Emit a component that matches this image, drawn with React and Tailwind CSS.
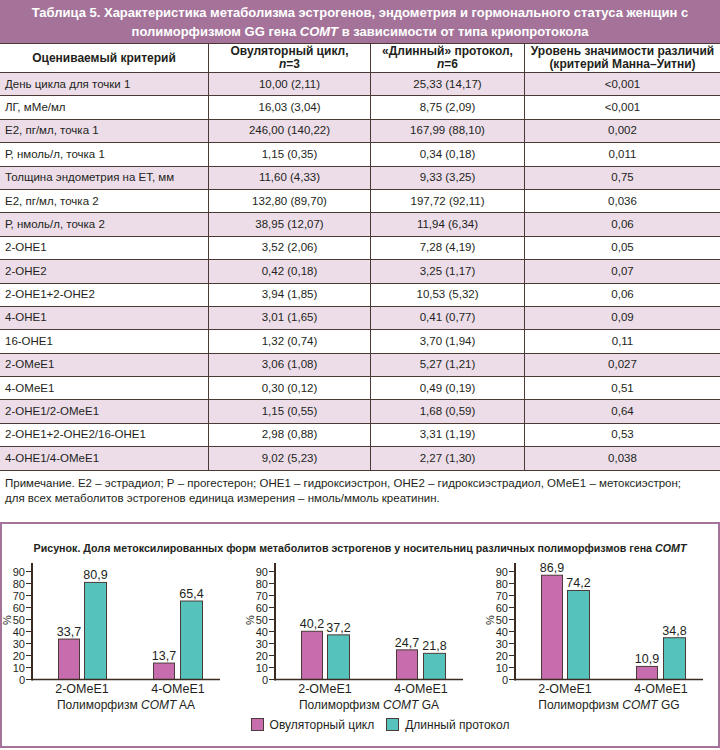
import React from "react";

const rows = [
  ["День цикла для точки 1", "10,00 (2,11)", "25,33 (14,17)", "<0,001"],
  ["ЛГ, мМе/мл", "16,03 (3,04)", "8,75 (2,09)", "<0,001"],
  ["Е2, пг/мл, точка 1", "246,00 (140,22)", "167,99 (88,10)", "0,002"],
  ["Р, нмоль/л, точка 1", "1,15 (0,35)", "0,34 (0,18)", "0,011"],
  ["Толщина эндометрия на ЕТ, мм", "11,60 (4,33)", "9,33 (3,25)", "0,75"],
  ["Е2, пг/мл, точка 2", "132,80 (89,70)", "197,72 (92,11)", "0,036"],
  ["Р, нмоль/л, точка 2", "38,95 (12,07)", "11,94 (6,34)", "0,06"],
  ["2-ОНЕ1", "3,52 (2,06)", "7,28 (4,19)", "0,05"],
  ["2-ОНЕ2", "0,42 (0,18)", "3,25 (1,17)", "0,07"],
  ["2-ОНЕ1+2-ОНЕ2", "3,94 (1,85)", "10,53 (5,32)", "0,06"],
  ["4-ОНЕ1", "3,01 (1,65)", "0,41 (0,77)", "0,09"],
  ["16-ОНЕ1", "1,32 (0,74)", "3,70 (1,94)", "0,11"],
  ["2-ОМеЕ1", "3,06 (1,08)", "5,27 (1,21)", "0,027"],
  ["4-ОМеЕ1", "0,30 (0,12)", "0,49 (0,19)", "0,51"],
  ["2-ОНЕ1/2-ОМеЕ1", "1,15 (0,55)", "1,68 (0,59)", "0,64"],
  ["2-ОНЕ1+2-ОНЕ2/16-ОНЕ1", "2,98 (0,88)", "3,31 (1,19)", "0,53"],
  ["4-ОНЕ1/4-ОМеЕ1", "9,02 (5,23)", "2,27 (1,30)", "0,038"],
];

const font = { fontFamily: '"Liberation Sans", Arial, sans-serif' };

function Chart({ ax, data, label }) {
  const zero = 119.5;
  const k = 1.2;
  const bars = [
    { x: ax + 26, w: 21, v: data[0][0], c: "#c76dad" },
    { x: ax + 52, w: 22, v: data[0][1], c: "#55c3bb" },
    { x: ax + 121, w: 21, v: data[1][0], c: "#c76dad" },
    { x: ax + 148, w: 22, v: data[1][1], c: "#55c3bb" },
  ];
  const ticks = [0, 10, 20, 30, 40, 50, 60, 70, 80, 90];
  return (
    <div className="w-[240px] flex flex-col">
      <svg width="240" height="138" style={font}>
        {ticks.map((t) => (
          <g key={t}>
            <line x1={ax - 6} x2={ax} y1={zero - t * k} y2={zero - t * k} stroke="#3b2b20" strokeWidth="1" />
            <text x={ax - 7} y={zero - t * k + 4} fontSize="11" textAnchor="end" fill="#231f20">
              {t}
            </text>
          </g>
        ))}
        <text x={ax - 21} y={60} fontSize="11" textAnchor="middle" fill="#231f20" transform={`rotate(-90 ${ax - 21} 60)`}>
          %
        </text>
        {bars.map((b, i) => {
          const h = b.v * k;
          return (
            <g key={i}>
              <rect x={b.x + 0.5} y={zero - h} width={b.w} height={h} fill={b.c} stroke="#4a3a38" strokeWidth="1" />
              <text x={b.x + b.w / 2 + 0.5} y={zero - h - 3} fontSize="12.5" textAnchor="middle" fill="#231f20">
                {String(b.v).replace(".", ",")}
              </text>
            </g>
          );
        })}
        <line x1={ax} x2={ax} y1={3} y2={zero + 1} stroke="#3b2b20" strokeWidth="2" />
        <line x1={ax} x2={ax + 188} y1={zero} y2={zero} stroke="#3b2b20" strokeWidth="1.6" />
        <text x={ax + 50} y={133} fontSize="12.5" textAnchor="middle" fill="#231f20">2-OMeE1</text>
        <text x={ax + 146} y={133} fontSize="12.5" textAnchor="middle" fill="#231f20">4-OMeE1</text>
      </svg>
      <div className="flex">
        <div style={{ width: ax }} />
        <div className="w-[188px] text-center text-[12px] leading-[14px] text-[#231f20]">
          Полиморфизм <i>COMT</i> {label}
        </div>
      </div>
    </div>
  );
}

export default function App() {
  return (
    <div className="w-[720px] h-[750px] bg-white overflow-hidden text-[#231f20]" style={font}>
      {/* Title */}
      <div className="h-[44px] bg-[#a57399] flex flex-col items-center justify-center text-white font-bold text-[13px] leading-[19px] border-b border-[#4b3a33]">
        <div>Таблица 5. Характеристика метаболизма эстрогенов, эндометрия и гормонального статуса женщин с</div>
        <div>
          полиморфизмом GG гена <i>COMT</i> в зависимости от типа криопротокола
        </div>
      </div>
      {/* Table */}
      <div className="grid grid-cols-[209px_162px_154px_195px]">
        <div className="h-[29px] border-b border-r border-[#4b3a33] flex items-center justify-center font-bold text-[12px]">
          Оцениваемый критерий
        </div>
        <div className="h-[29px] border-b border-r border-[#4b3a33] flex flex-col items-center justify-center font-bold text-[12px] leading-[13px]">
          <div>Овуляторный цикл,</div>
          <div>
            <i>n</i>=3
          </div>
        </div>
        <div className="h-[29px] border-b border-r border-[#4b3a33] flex flex-col items-center justify-center font-bold text-[12px] leading-[13px]">
          <div>«Длинный» протокол,</div>
          <div>
            <i>n</i>=6
          </div>
        </div>
        <div className="h-[29px] border-b border-[#4b3a33] flex flex-col items-center justify-center font-bold text-[12px] leading-[13px]">
          <div>Уровень значимости различий</div>
          <div>(критерий Манна–Уитни)</div>
        </div>
        {rows.map((r, i) => {
          const bg = i % 2 === 0 ? "bg-[#ecdde9]" : "bg-white";
          return (
            <React.Fragment key={i}>
              <div className={`h-[23.4px] ${bg} border-b border-r border-[#4b3a33] flex items-center pl-[5px] text-[11.5px]`}>{r[0]}</div>
              <div className={`h-[23.4px] ${bg} border-b border-r border-[#4b3a33] flex items-center justify-center text-[11.5px]`}>{r[1]}</div>
              <div className={`h-[23.4px] ${bg} border-b border-r border-[#4b3a33] flex items-center justify-center text-[11.5px]`}>{r[2]}</div>
              <div className={`h-[23.4px] ${bg} border-b border-[#4b3a33] flex items-center justify-center text-[11.5px]`}>{r[3]}</div>
            </React.Fragment>
          );
        })}
      </div>
      {/* Note */}
      <div className="pl-[5px] pt-[5px] text-[11.5px] leading-[15px]">
        <div>
          Примечание. Е2 – эстрадиол; Р – прогестерон; ОНЕ1 – гидроксиэстрон, ОНЕ2 – гидроксиэстрадиол, ОМеЕ1 – метоксиэстрон;
        </div>
        <div>для всех метаболитов эстрогенов единица измерения – нмоль/ммоль креатинин.</div>
      </div>
      {/* Figure */}
      <div className="mt-[16px] h-[226px] border-2 border-[#a57399] flex flex-col">
        <div className="pt-[17px] text-center font-bold text-[10.7px] leading-[14px]">
          Рисунок. Доля метоксилированных форм метаболитов эстрогенов у носительниц различных полиморфизмов гена <i>COMT</i>
        </div>
        <div className="flex -ml-[2px] mt-[5px]">
          <Chart ax={32} data={[[33.7, 80.9], [13.7, 65.4]]} label="AA" />
          <Chart ax={35} data={[[40.2, 37.2], [24.7, 21.8]]} label="GA" />
          <Chart ax={35} data={[[86.9, 74.2], [10.9, 34.8]]} label="GG" />
        </div>
        <div className="flex justify-center items-center gap-[6px] mt-[4px] text-[12px] pl-[40px]">
          <div className="w-[13px] h-[13px] bg-[#c76dad] border border-[#4a3a38]" />
          <div className="mr-[6px]">Овуляторный цикл</div>
          <div className="w-[13px] h-[13px] bg-[#55c3bb] border border-[#4a3a38]" />
          <div>Длинный протокол</div>
        </div>
      </div>
    </div>
  );
}
